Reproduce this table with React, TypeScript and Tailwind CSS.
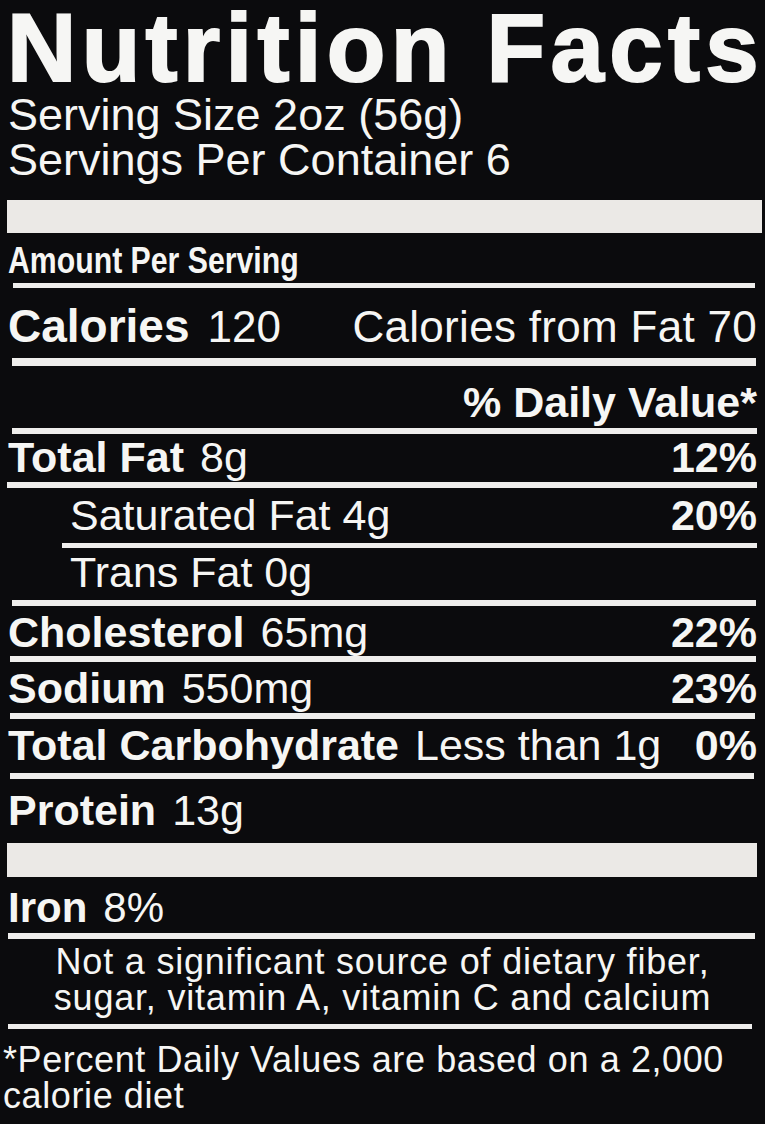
import clsx from "clsx";

type Nutrient = {
  name?: string;
  amount: string;
  dv?: string;
  indent?: boolean;
  pad: string;
  rule: string;
};

const nutrients: Nutrient[] = [
  { name: "Total Fat", amount: "8g", dv: "12%", pad: "pt-[2px] pb-[3px]", rule: "h-[6px] ml-[7px] mr-[8px]" },
  { amount: "Saturated Fat 4g", dv: "20%", indent: true, pad: "pt-[6px] pb-[6px]", rule: "h-[5px] ml-[62px] mr-[8px]" },
  { amount: "Trans Fat 0g", indent: true, pad: "pt-[3px] pb-[6px]", rule: "h-[6px] ml-[12px] mr-[9px]" },
  { name: "Cholesterol", amount: "65mg", dv: "22%", pad: "pt-[5px] pb-[2px]", rule: "h-[6px] ml-[10px] mr-[9px]" },
  { name: "Sodium", amount: "550mg", dv: "23%", pad: "pt-[5px] pb-[3px]", rule: "h-[6px] ml-[10px] mr-[10px]" },
  { name: "Total Carbohydrate", amount: "Less than 1g", dv: "0%", pad: "pt-[5px] pb-[6px]", rule: "h-[6px] ml-[10px] mr-[11px]" },
];

function Row({ n }: { n: Nutrient }) {
  return (
    <>
      <div
        className={clsx(
          "flex items-baseline justify-between pr-[8px] text-[43px] leading-none whitespace-nowrap",
          n.indent ? "pl-[70px]" : "pl-[8px]",
          n.pad
        )}
      >
        <span className="flex items-baseline gap-[16px]">
          {n.name && <span className="font-bold">{n.name}</span>}
          <span>{n.amount}</span>
        </span>
        {n.dv && <span className="font-bold">{n.dv}</span>}
      </div>
      <div className={clsx("bg-[#efeeec]", n.rule)} />
    </>
  );
}

export default function App() {
  return (
    <div className="min-h-screen w-full overflow-hidden bg-[#0b0b0d] font-['Liberation_Sans',Arial,sans-serif] text-[#f6f6f4]">
      <h1 className="pt-[4px] pl-[7px] text-[96px] leading-[88px] font-bold tracking-[5.3px] whitespace-nowrap [-webkit-text-stroke:2px_#f6f6f4]">
        Nutrition Facts
      </h1>
      <div className="pl-[8px] text-[45px] leading-[45px]">
        <p>Serving Size 2oz (56g)</p>
        <p>Servings Per Container 6</p>
      </div>

      <div className="mt-[18px] ml-[7px] mr-[3px] h-[33px] bg-[#ebe9e6]" />

      <div className="pt-[10px] pb-[4px] pl-[8px] text-[36px] leading-none font-bold">
        <span className="inline-block origin-left scale-x-[0.84] whitespace-nowrap">Amount Per Serving</span>
      </div>
      <div className="ml-[13px] mr-[10px] h-[5px] bg-[#efeeec]" />

      <div className="flex items-baseline justify-between pt-[15px] pb-[9px] pl-[8px] pr-[8px] text-[46px] leading-none whitespace-nowrap">
        <span className="flex items-baseline gap-[18px]">
          <span className="font-bold">Calories</span>
          <span className="text-[44px]">120</span>
        </span>
        <span className="text-[44px] tracking-[0.3px]">Calories from Fat 70</span>
      </div>
      <div className="ml-[12px] mr-[9px] h-[8px] bg-[#efeeec]" />

      <div className="pt-[15px] pb-[4px] pr-[8px] text-right text-[43px] leading-none font-bold">
        % Daily Value*
      </div>
      <div className="ml-[12px] mr-[8px] h-[6px] bg-[#efeeec]" />

      {nutrients.map((n) => (
        <Row key={n.amount} n={n} />
      ))}

      <div className="flex items-baseline gap-[16px] pt-[10px] pb-[11px] pl-[8px] text-[43px] leading-none">
        <span className="font-bold">Protein</span>
        <span>13g</span>
      </div>

      <div className="ml-[7px] mr-[8px] h-[34px] bg-[#ebe9e6]" />

      <div className="flex items-baseline gap-[16px] pt-[10px] pb-[4px] pl-[8px] text-[42px] leading-none">
        <span className="font-bold">Iron</span>
        <span>8%</span>
      </div>
      <div className="ml-[8px] mr-[10px] h-[6px] bg-[#efeeec]" />

      <p className="pt-[5px] pb-[8px] text-center text-[36px] leading-[36px] tracking-[0.8px]">
        Not a significant source of dietary fiber,
        <br />
        sugar, vitamin A, vitamin C and calcium
      </p>
      <div className="ml-[8px] mr-[13px] h-[5px] bg-[#efeeec]" />

      <p className="pt-[13px] pl-[3px] text-[36px] leading-[36px] tracking-[0.6px]">
        *Percent Daily Values are based on a 2,000
        <br />
        calorie diet
      </p>
    </div>
  );
}
